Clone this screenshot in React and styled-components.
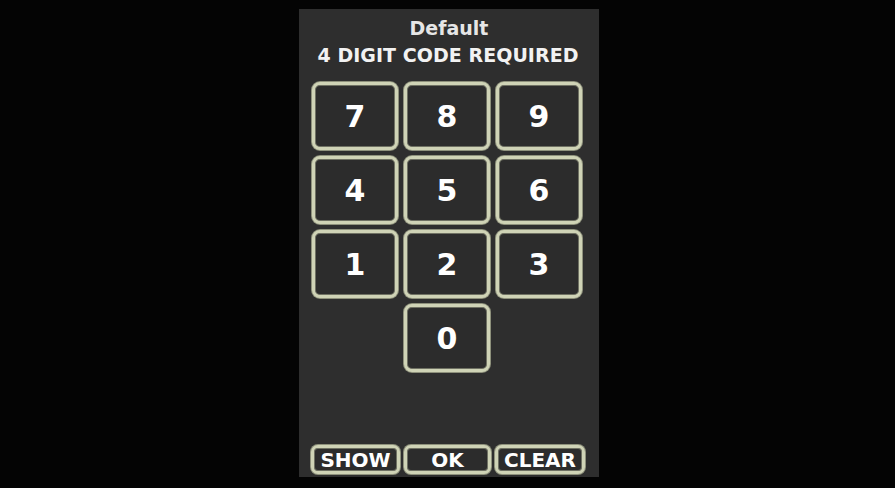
import React from "react";
import styled, { createGlobalStyle } from "styled-components";

const Global = createGlobalStyle`
  html, body { margin: 0; padding: 0; background: #040404; }
  body { width: 895px; height: 488px; overflow: hidden; font-family: "DejaVu Sans", sans-serif; }
`;

const Screen = styled.div`
  width: 895px;
  height: 488px;
  display: flex;
  justify-content: center;
  padding-top: 9px;
  box-sizing: border-box;
  background: #040404;
`;

const Panel = styled.div`
  width: 300px;
  height: 468px;
  margin-left: 3px;
  background: #2e2e2e;
  display: flex;
  flex-direction: column;
  align-items: center;
  box-sizing: border-box;
`;

const Title = styled.div`
  margin-top: 6px;
  font-weight: bold;
  font-size: 19px;
  line-height: 26px;
  color: #e6e6e6;
`;

const Subtitle = styled.div`
  margin-top: 1px;
  margin-left: -2px;
  font-weight: bold;
  font-size: 19px;
  line-height: 26px;
  letter-spacing: 0.05px;
  color: #f2f2f2;
`;

const Grid = styled.div`
  margin-top: 14px;
  margin-left: -4px;
  display: grid;
  grid-template-columns: repeat(3, 86px);
  grid-auto-rows: 68px;
  gap: 6px;
`;

const Key = styled.button`
  grid-column: ${(p) => p.$col || "auto"};
  box-sizing: border-box;
  margin: 0;
  padding: 0;
  border: 3px solid #cfd3b6;
  border-radius: 8px;
  background: #2c2c2c;
  box-shadow: 0 0 0 1px #8e917c, inset 0 0 0 1px #6f7163;
  color: #ffffff;
  font-family: "DejaVu Sans", sans-serif;
  font-weight: bold;
  font-size: 30px;
  display: flex;
  align-items: center;
  justify-content: center;
`;

const Spacer = styled.div`
  flex: 1;
`;

const Bottom = styled.div`
  display: grid;
  grid-template-columns: 89px 87px 90px;
  gap: 4px;
  margin-left: -2px;
  margin-bottom: 3px;
`;

const ActionButton = styled.button`
  box-sizing: border-box;
  height: 29px;
  margin: 0;
  padding: 0;
  border: 3px solid #cfd3b6;
  border-radius: 7px;
  background: #2c2c2c;
  box-shadow: 0 0 0 1px #8e917c, inset 0 0 0 1px #6f7163;
  color: #ffffff;
  font-family: "DejaVu Sans", sans-serif;
  font-weight: bold;
  font-size: 20px;
  line-height: 22px;
  display: flex;
  align-items: center;
  justify-content: center;
`;

const keys = ["7", "8", "9", "4", "5", "6", "1", "2", "3"];

export default function App() {
  return (
    <>
      <Global />
      <Screen>
        <Panel>
          <Title>Default</Title>
          <Subtitle>4 DIGIT CODE REQUIRED</Subtitle>
          <Grid>
            {keys.map((k) => (
              <Key key={k}>{k}</Key>
            ))}
            <Key $col="2">0</Key>
          </Grid>
          <Spacer />
          <Bottom>
            <ActionButton>SHOW</ActionButton>
            <ActionButton>OK</ActionButton>
            <ActionButton>CLEAR</ActionButton>
          </Bottom>
        </Panel>
      </Screen>
    </>
  );
}
